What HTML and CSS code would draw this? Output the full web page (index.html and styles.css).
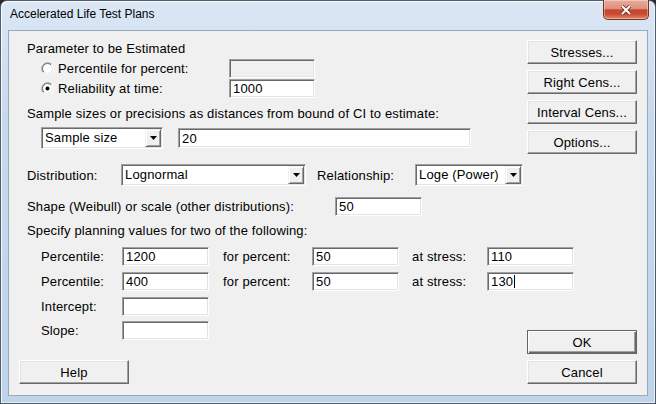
FILE: index.html
```html
<!DOCTYPE html>
<html>
<head>
<meta charset="utf-8">
<link rel="stylesheet" href="styles.css">
</head>
<body>
<div class="window">
  <div class="titlebar">
    <span class="title">Accelerated Life Test Plans</span>
    <div class="close">
      <svg width="12" height="10" viewBox="0 0 12 10"><path d="M2 1 L10 9 M10 1 L2 9" stroke="#6b2a1e" stroke-width="3.6"/><path d="M2 1 L10 9 M10 1 L2 9" stroke="#fff" stroke-width="2"/></svg>
    </div>
  </div>
  <div class="client">
    <div class="main">
      <div class="fields">
        <div class="lbl r-a">Parameter to be Estimated</div>
        <div class="row r-b indent">
          <svg class="radio" width="13" height="13" viewBox="0 0 13 13"><circle cx="6.5" cy="6.5" r="6" fill="#fff"/><path d="M2.26 10.74 A6 6 0 0 1 10.74 2.26" stroke="#a0a0a0" fill="none"/><path d="M2.96 10.04 A5 5 0 0 1 10.04 2.96" stroke="#696969" fill="none"/><path d="M10.74 2.26 A6 6 0 0 1 2.26 10.74" stroke="#ffffff" fill="none"/><path d="M10.04 2.96 A5 5 0 0 1 2.96 10.04" stroke="#e3e3e3" fill="none"/></svg>
          <span class="w-radio">Percentile for percent:</span>
          <div class="tb w86 disabled"></div>
        </div>
        <div class="row r-c indent">
          <svg class="radio" width="13" height="13" viewBox="0 0 13 13"><circle cx="6.5" cy="6.5" r="6" fill="#fff"/><path d="M2.26 10.74 A6 6 0 0 1 10.74 2.26" stroke="#a0a0a0" fill="none"/><path d="M2.96 10.04 A5 5 0 0 1 10.04 2.96" stroke="#696969" fill="none"/><path d="M10.74 2.26 A6 6 0 0 1 2.26 10.74" stroke="#ffffff" fill="none"/><path d="M10.04 2.96 A5 5 0 0 1 2.96 10.04" stroke="#e3e3e3" fill="none"/><circle cx="6.5" cy="6.5" r="2" fill="#000"/></svg>
          <span class="w-radio">Reliability at time:</span>
          <div class="tb w86">1000</div>
        </div>
        <div class="lbl r-d">Sample sizes or precisions as distances from bound of CI to estimate:</div>
        <div class="row r-e indent">
          <div class="combo w-ss"><span class="ctext">Sample size</span><span class="dd"><svg width="7" height="4" viewBox="0 0 7 4"><polygon points="0,0 7,0 3.5,4" fill="#000"/></svg></span></div>
          <div class="tb w-20">20</div>
        </div>
        <div class="row r-f">
          <span class="w-dist">Distribution:</span>
          <div class="combo w-dc"><span class="ctext">Lognormal</span><span class="dd"><svg width="7" height="4" viewBox="0 0 7 4"><polygon points="0,0 7,0 3.5,4" fill="#000"/></svg></span></div>
          <span class="w-rel">Relationship:</span>
          <div class="combo w-rc"><span class="ctext">Loge (Power)</span><span class="dd"><svg width="7" height="4" viewBox="0 0 7 4"><polygon points="0,0 7,0 3.5,4" fill="#000"/></svg></span></div>
        </div>
        <div class="row r-g">
          <span class="w-shape">Shape (Weibull) or scale (other distributions):</span>
          <div class="tb">50</div>
        </div>
        <div class="lbl r-h">Specify planning values for two of the following:</div>
        <div class="row r-i indent">
          <span class="w-pl">Percentile:</span>
          <div class="tb">1200</div>
          <span class="w-fp">for percent:</span>
          <div class="tb">50</div>
          <span class="w-as">at stress:</span>
          <div class="tb">110</div>
        </div>
        <div class="row r-j indent">
          <span class="w-pl">Percentile:</span>
          <div class="tb">400</div>
          <span class="w-fp">for percent:</span>
          <div class="tb">50</div>
          <span class="w-as">at stress:</span>
          <div class="tb">130<span class="caret"></span></div>
        </div>
        <div class="row r-k indent">
          <span class="w-pl">Intercept:</span>
          <div class="tb"></div>
        </div>
        <div class="row r-l indent">
          <span class="w-pl">Slope:</span>
          <div class="tb"></div>
        </div>
      </div>
      <div class="btn help">Help</div>
    </div>
    <div class="side">
      <div class="group">
        <div class="btn">Stresses...</div>
        <div class="btn">Right Cens...</div>
        <div class="btn">Interval Cens...</div>
        <div class="btn">Options...</div>
      </div>
      <div class="group">
        <div class="btn default">OK</div>
        <div class="btn">Cancel</div>
      </div>
    </div>
  </div>
</div>
</body>
</html>
```
FILE: styles.css
```css
body {
  margin: 0;
  font: 13px "Liberation Sans", Arial, sans-serif;
  letter-spacing: 0.15px;
  color: #000;
  background: #2b2b2b;
}
.window {
  box-sizing: border-box;
  width: 656px;
  height: 404px;
  border: 1px solid #4f5d6e;
  border-radius: 7px 7px 0 0;
  background: linear-gradient(#dbe7f5, #c7d9ed 30%, #bfd3e9);
  box-shadow: inset 1px 1px 0 rgba(255,255,255,0.85), inset -1px -1px 0 rgba(255,255,255,0.6);
  padding: 0 7px 7px;
  display: flex;
  flex-direction: column;
}
.titlebar {
  height: 29px;
  display: flex;
  align-items: flex-start;
}
.title {
  font-size: 12px;
  letter-spacing: 0;
  line-height: 27px;
  margin-left: 2px;
}
.close {
  margin-left: auto;
  margin-right: -1px;
  margin-top: -1px;
  box-sizing: border-box;
  width: 46px;
  height: 20px;
  border: 1px solid #7a3223;
  border-top: none;
  border-radius: 0 0 5px 5px;
  background: linear-gradient(#e9ab9b 0%, #dc917d 45%, #c8452c 52%, #c94b31 75%, #e28d6c 100%);
  box-shadow: inset 0 0 0 1px rgba(255,255,255,0.35);
  display: flex;
  align-items: center;
  justify-content: center;
}
.client {
  flex: 1;
  display: flex;
  border: 1px solid #98a9bd;
  background: #f0f0f0;
}
.main {
  flex: 1;
  min-width: 0;
  display: flex;
  flex-direction: column;
  padding: 10px 0 11px 10px;
}
.fields {
  display: flex;
  flex-direction: column;
  padding-left: 8px;
}
.lbl { height: 16px; line-height: 16px; white-space: nowrap; }
.row { display: flex; align-items: center; height: 20px; white-space: nowrap; }
.indent { padding-left: 14px; }
.r-b { margin-top: 1px; }
.r-c { margin-top: 0; }
.r-d { margin-top: 8px; }
.r-e { margin-top: 5px; height: 22px; }
.r-f { margin-top: 15px; height: 22px; }
.r-g { margin-top: 10px; }
.r-h { margin-top: 7px; }
.r-i { margin-top: 7px; }
.r-j { margin-top: 5px; }
.r-k { margin-top: 5px; }
.r-l { margin-top: 4px; }

.radio { margin-right: 4px; flex: none; }
.row > span { flex: none; }
.w-radio { width: 171px; }
.w-dist { width: 94px; }
.w-rel { width: 98px; margin-left: 11px; }
.w-shape { width: 308px; }
.w-pl { width: 81px; }
.w-fp { width: 89px; margin-left: 14px; }
.w-as { width: 75px; margin-left: 13px; }

.tb {
  box-sizing: border-box;
  width: 87px;
  height: 19px;
  border: 1px solid;
  border-color: #a0a0a0 #ffffff #ffffff #a0a0a0;
  box-shadow: inset 1px 1px 0 #696969, inset -1px -1px 0 #e3e3e3;
  background: #fff;
  padding: 0 3px;
  line-height: 17px;
  display: flex;
  align-items: center;
  flex: none;
}
.w86 { width: 86px; }
.w-20 { width: 293px; height: 20px; margin-left: 15px; }
.disabled { background: #f0f0f0; }
.caret {
  display: inline-block;
  width: 1px;
  height: 13px;
  background: #000;
  margin-left: 1px;
}

.combo {
  box-sizing: border-box;
  height: 22px;
  border: 1px solid;
  border-color: #a0a0a0 #ffffff #ffffff #a0a0a0;
  box-shadow: inset 1px 1px 0 #696969, inset -1px -1px 0 #e3e3e3;
  background: #fff;
  padding: 1px;
  display: flex;
  flex: none;
}
.w-ss { width: 122px; }
.w-dc { width: 185px; }
.w-rc { width: 108px; }
.ctext {
  flex: 1;
  padding-left: 2px;
  line-height: 18px;
  overflow: hidden;
}
.dd {
  box-sizing: border-box;
  width: 16px;
  border: 1px solid;
  border-color: #f0f0f0 #696969 #696969 #f0f0f0;
  box-shadow: inset 1px 1px 0 #ffffff, inset -1px -1px 0 #a0a0a0;
  background: #f0f0f0;
  display: flex;
  align-items: center;
  justify-content: center;
}

.side {
  width: 120px;
  flex: none;
  box-sizing: border-box;
  padding: 9px 10px 11px 0;
  display: flex;
  flex-direction: column;
  justify-content: space-between;
}
.group {
  display: flex;
  flex-direction: column;
  gap: 6px;
}
.btn {
  box-sizing: border-box;
  width: 110px;
  height: 24px;
  border: 1px solid;
  border-color: #ffffff #696969 #696969 #ffffff;
  box-shadow: inset -1px -1px 0 #a0a0a0, inset 1px 1px 0 #e3e3e3;
  background: #f0f0f0;
  display: flex;
  align-items: center;
  justify-content: center;
  white-space: nowrap;
}
.default {
  border-color: #646464;
  box-shadow: inset 1px 1px 0 #ffffff, inset -1px -1px 0 #696969, inset -2px -2px 0 #a0a0a0;
}
.help {
  margin-top: auto;
}
```
